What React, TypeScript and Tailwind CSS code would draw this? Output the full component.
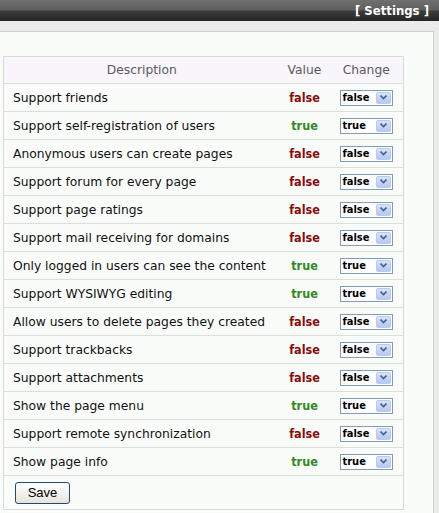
const settings = [
  { label: "Support friends", value: false },
  { label: "Support self-registration of users", value: true },
  { label: "Anonymous users can create pages", value: false },
  { label: "Support forum for every page", value: false },
  { label: "Support page ratings", value: false },
  { label: "Support mail receiving for domains", value: false },
  { label: "Only logged in users can see the content", value: true },
  { label: "Support WYSIWYG editing", value: true },
  { label: "Allow users to delete pages they created", value: false },
  { label: "Support trackbacks", value: false },
  { label: "Support attachments", value: false },
  { label: "Show the page menu", value: true },
  { label: "Support remote synchronization", value: false },
  { label: "Show page info", value: true },
];

const font = "font-['DejaVu_Sans',sans-serif]";

const FakeSelect = ({ value }: { value: boolean }) => (
  <div className="w-[53px] h-[16px] border border-[#7f9db9] bg-white flex items-center justify-between pl-[2px] pr-[1px]">
    <span className="text-[11px] font-bold text-black leading-none font-['DejaVu_Sans_Condensed',sans-serif]">
      {value ? "true" : "false"}
    </span>
    <span className="w-[15px] h-[12px] rounded-[2px] bg-gradient-to-b from-[#d8e4fc] to-[#b4c8f4] border border-[#b9cbf3] flex items-center justify-center">
      <svg width="7" height="5" viewBox="0 0 7 5">
        <path d="M0.5 0.5 L3.5 3.5 L6.5 0.5" stroke="#4d6185" strokeWidth="1.6" fill="none" />
      </svg>
    </span>
  </div>
);

const App = () => {
  return (
    <div className={`w-[439px] h-[513px] overflow-hidden bg-[#eaece9] ${font}`}>
      <div className="h-[21px] bg-[linear-gradient(to_bottom,#6f706f_0%,#5e5f5e_48%,#3c3c3c_52%,#262626_100%)] flex items-center justify-end pr-[10px]">
        <span className="text-white text-[13px] font-bold leading-none font-['DejaVu_Sans_Condensed',sans-serif]">[ Settings ]</span>
      </div>
      <div className="mt-[10px] mr-[5px] h-[500px] bg-[#fafcfa] border-t border-r border-[#cfd1ce] pt-[24px] pl-[3px]">
        <table className="w-[401px] border border-[#d9dbd8] border-collapse text-[12.3px]">
          <thead>
            <tr className="h-[27px] bg-[#f8f6fb] text-[#5a5a5a]">
              <th className="font-normal text-center w-[276px] pt-[1px]">Description</th>
              <th className="font-normal text-center w-[50px] pt-[1px]">Value</th>
              <th className="font-normal text-center pt-[1px]">Change</th>
            </tr>
          </thead>
          <tbody>
            {settings.map(({ label, value }) => (
              <tr key={label} className="h-[28px] border-t border-[#dcdedb]">
                <td className="pl-[9px] pt-[1px] text-[#111]">{label}</td>
                <td className={`text-center pt-[1px] font-bold font-['DejaVu_Sans_Condensed',sans-serif] text-[12.5px] ${value ? "text-[#2f8a1f]" : "text-[#8b0a0a]"}`}>
                  {value ? "true" : "false"}
                </td>
                <td className="pl-[10px]">
                  <FakeSelect value={value} />
                </td>
              </tr>
            ))}
            <tr className="h-[34px] border-t border-[#dcdedb]">
              <td colSpan={3} className="pl-[11px]">
                <button className="w-[55px] h-[22px] rounded-[3px] border border-[#1c4a7c] bg-gradient-to-b from-[#ffffff] to-[#e6e4da] text-[13px] text-black font-['Liberation_Sans',sans-serif]">
                  Save
                </button>
              </td>
            </tr>
          </tbody>
        </table>
      </div>
    </div>
  );
};

export default App;
